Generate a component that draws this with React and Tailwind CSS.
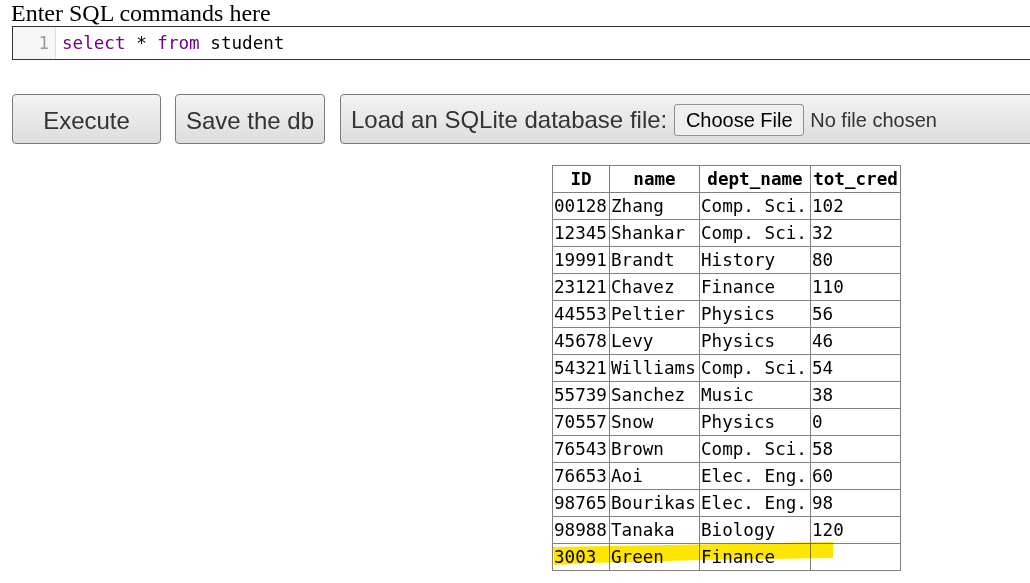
import React from 'react';

// student rows shown in the result table
const rows = [
  ['00128', 'Zhang', 'Comp. Sci.', '102'],
  ['12345', 'Shankar', 'Comp. Sci.', '32'],
  ['19991', 'Brandt', 'History', '80'],
  ['23121', 'Chavez', 'Finance', '110'],
  ['44553', 'Peltier', 'Physics', '56'],
  ['45678', 'Levy', 'Physics', '46'],
  ['54321', 'Williams', 'Comp. Sci.', '54'],
  ['55739', 'Sanchez', 'Music', '38'],
  ['70557', 'Snow', 'Physics', '0'],
  ['76543', 'Brown', 'Comp. Sci.', '58'],
  ['76653', 'Aoi', 'Elec. Eng.', '60'],
  ['98765', 'Bourikas', 'Elec. Eng.', '98'],
  ['98988', 'Tanaka', 'Biology', '120'],
  ['3003', 'Green', 'Finance', ''],
];

const mono = "font-['DejaVu_Sans_Mono','Liberation_Mono',monospace]";
const btn =
  "h-[50px] rounded-[4px] border border-[#7a7a7a] bg-gradient-to-b from-[#f3f3f3] to-[#dddddd] text-[24px] text-[#333] font-['Liberation_Sans',Arial,sans-serif]";

export default function App() {
  return (
    <div className="w-[1030px] h-[583px] overflow-hidden bg-white">
      <div className="w-[1450px] px-3">
        <div className="text-[24px] leading-[26px] text-black font-['Liberation_Serif','Times_New_Roman',serif] -ml-[1px]">
          Enter SQL commands here
        </div>

        {/* editor */}
        <div className="flex h-[34px] border border-[#333]">
          <div className="w-[43px] shrink-0 bg-[#f7f7f7] border-r border-[#ddd] flex items-center justify-end pr-[6px]">
            <span className={`${mono} text-[17.6px] text-[#999]`}>1</span>
          </div>
          <div className={`${mono} text-[17.6px] flex items-center pl-[6px] whitespace-pre`}>
            <span className="text-[#770088]">select</span>
            <span className="text-black"> * </span>
            <span className="text-[#770088]">from</span>
            <span className="text-black"> student</span>
          </div>
        </div>

        {/* buttons */}
        <div className="flex mt-[34px]">
          <button className={`${btn} w-[149px] pt-[3px]`}>Execute</button>
          <button className={`${btn} w-[150px] ml-[14px] pt-[3px]`}>Save the db</button>
          <div className={`${btn} w-[900px] flex items-center pl-[10px] ml-[15px] pt-[2px]`}>
            <span>Load an SQLite database file:</span>
            <span className="ml-[7px] h-[32px] w-[130px] rounded-[3px] border border-[#8f8f8f] bg-[#efefef] text-[20px] text-black flex items-center justify-center">
              Choose File
            </span>
            <span className="ml-[6px] text-[20px]">No file chosen</span>
          </div>
        </div>

        {/* result table */}
        <div className="relative ml-[540px] mt-[21px] w-fit">
          <table className={`${mono} text-[17.6px] text-black border-collapse table-fixed`}>
            <colgroup>
              <col className="w-[57px]" />
              <col className="w-[90px]" />
              <col className="w-[111px]" />
              <col className="w-[90px]" />
            </colgroup>
            <thead>
              <tr className="h-[27px]">
                {['ID', 'name', 'dept_name', 'tot_cred'].map((h) => (
                  <th key={h} className="border border-[#808080] font-bold text-center p-0 pt-[2px] leading-none">
                    {h}
                  </th>
                ))}
              </tr>
            </thead>
            <tbody>
              {rows.map((r) => (
                <tr key={r[0]} className="h-[27px]">
                  {r.map((c, i) => (
                    <td key={i} className="border border-[#808080] px-[1px] pt-[2px] pb-0 leading-none whitespace-nowrap">
                      {c}
                    </td>
                  ))}
                </tr>
              ))}
            </tbody>
          </table>

          {/* highlighter mark on the last row */}
          <svg className="absolute left-0 top-0 pointer-events-none mix-blend-multiply" width="350" height="410">
            <path d="M1 382 L281 377 L281 393 L150 395 L40 398 L2 400 Z" fill="#ffe600" />
          </svg>
        </div>
      </div>
    </div>
  );
}
